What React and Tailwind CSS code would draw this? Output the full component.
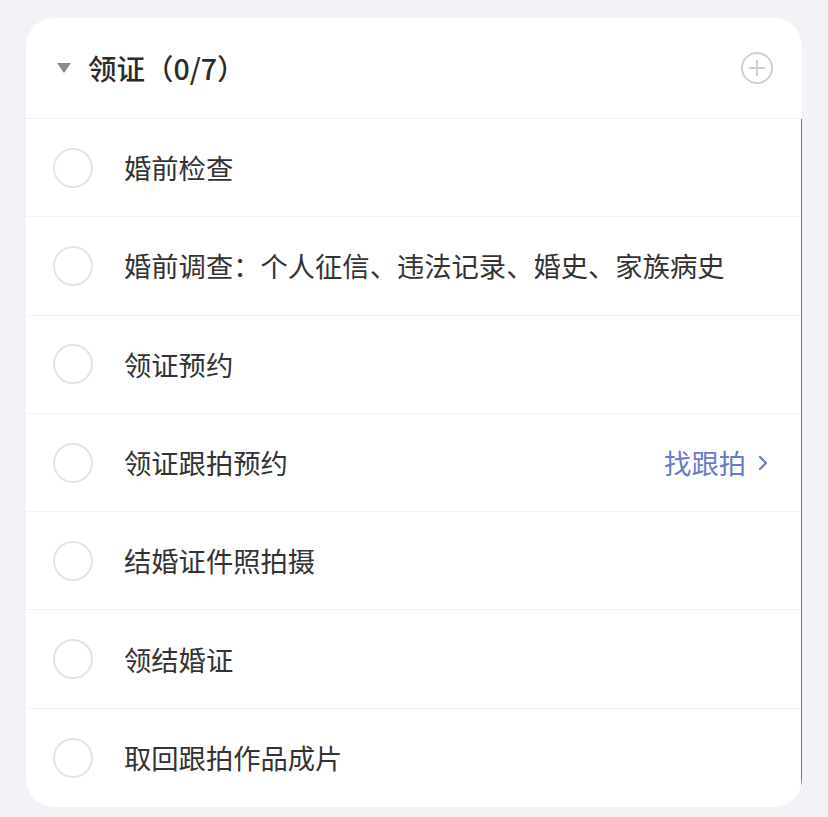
import React from 'react';

const items = [
    { title: '婚前检查' },
    { title: '婚前调查：个人征信、违法记录、婚史、家族病史' },
    { title: '领证预约' },
    { title: '领证跟拍预约', action: '找跟拍' },
    { title: '结婚证件照拍摄' },
    { title: '领结婚证' },
    { title: '取回跟拍作品成片' },
];

export default function App() {
    return (
        <div
            className="min-h-[817px] bg-[#f2f3f6] pt-[18px] pl-[26px] pr-[26px] pb-[12px]"
            style={{ fontFamily: '"Noto Sans CJK SC", "Noto Sans", sans-serif' }}
        >
            <div className="bg-white rounded-[28px] overflow-hidden">
                {/* header */}
                <div className="h-[101px] flex items-center pl-[30px] pr-[28px] border-b border-[#f0f0f0]">
                    <svg width="16" height="12" viewBox="0 0 16 12" className="mr-[16px]">
                        <path d="M1 1 L15 1 L8 11 Z" fill="#8a8a8a" />
                    </svg>
                    <span className="text-[28.5px] text-[#2b2b2b] font-medium">领证（0/7）</span>
                    <div className="flex-1" />
                    <svg width="34" height="34" viewBox="0 0 34 34">
                        <circle cx="17" cy="17" r="15" fill="none" stroke="#cfcfcf" strokeWidth="2" />
                        <path d="M17 9 V25 M9 17 H25" stroke="#cfcfcf" strokeWidth="2" />
                    </svg>
                </div>

                {/* rows */}
                <div className="border-r border-[#6b7396]">
                    {items.map((item, i) => (
                        <div
                            key={i}
                            className={`h-[98.3px] flex items-center pl-[27px] pr-[31px] ${i < items.length - 1 ? 'border-b border-[#f2f2f2]' : ''}`}
                        >
                            <div className="w-[40px] h-[40px] rounded-full border-2 border-[#e4e4e4] shrink-0" />
                            <span className="ml-[31px] text-[27.3px] text-[#333333]">{item.title}</span>
                            <div className="flex-1" />
                            {item.action && (
                                <div className="flex items-center text-[#6a7bc7] text-[27.3px]">
                                    <span>{item.action}</span>
                                    <svg width="14" height="20" viewBox="0 0 14 20" className="ml-[10px]">
                                        <path d="M4 4 L10 10 L4 16" fill="none" stroke="#6a7bc7" strokeWidth="2.2" strokeLinecap="round" strokeLinejoin="round" />
                                    </svg>
                                </div>
                            )}
                        </div>
                    ))}
                </div>
            </div>
        </div>
    );
}
